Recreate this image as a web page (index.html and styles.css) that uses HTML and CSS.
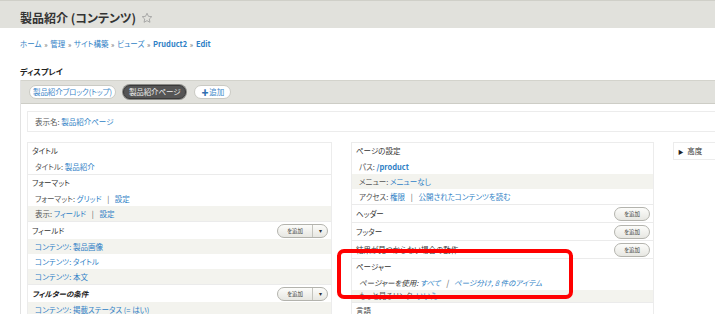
FILE: index.html
```html
<!DOCTYPE html>
<html lang="ja">
<head>
<meta charset="utf-8">
<title>製品紹介 (コンテンツ)</title>
<link rel="stylesheet" href="styles.css">
</head>
<body>
<header class="page-header">
  <h1 class="page-title">製品紹介 (コンテンツ)
    <svg class="star" viewBox="0 0 24 24" width="12" height="12" aria-hidden="true"><path d="M12 2.5l2.9 6.1 6.6.8-4.9 4.6 1.3 6.6L12 17.3l-5.9 3.3 1.3-6.6-4.9-4.6 6.6-.8z" fill="none" stroke="#9a9a9a" stroke-width="1.6" stroke-linejoin="round"/></svg>
  </h1>
</header>
<nav class="breadcrumb"><a href="#">ホーム</a> <span class="sep">»</span> <a href="#">管理</a> <span class="sep">»</span> <a href="#">サイト構築</a> <span class="sep">»</span> <a href="#">ビューズ</a> <span class="sep">»</span> <a href="#" class="strong">Pruduct2</a> <span class="sep">»</span> <a href="#" class="strong">Edit</a></nav>
<h2 class="section-title">ディスプレイ</h2>
<div class="display">
  <div class="tabs">
    <a href="#" class="tab">製品紹介ブロック(トップ)</a>
    <a href="#" class="tab active">製品紹介ページ</a>
    <a href="#" class="tab add"><span class="plus">✚</span>追加</a>
  </div>
  <div class="display-body">
    <div class="display-name"><span class="label">表示名:</span> <a href="#">製品紹介ページ</a></div>
    <div class="columns">
      <div class="col">
        <section class="bucket">
          <div class="bucket-head">タイトル</div>
          <div class="row"><span class="label">タイトル:</span> <a href="#">製品紹介</a></div>
        </section>
        <section class="bucket">
          <div class="bucket-head">フォーマット</div>
          <div class="row"><span class="label">フォーマット:</span> <a href="#">グリッド</a> <span class="pipe">|</span> <a href="#">設定</a></div>
          <div class="row striped"><span class="label">表示:</span> <a href="#">フィールド</a> <span class="pipe">|</span> <a href="#">設定</a></div>
        </section>
        <section class="bucket">
          <div class="bucket-head with-btn">フィールド
            <span class="btn split"><span class="btn-main">を追加</span><span class="btn-drop">▾</span></span>
          </div>
          <div class="row striped"><a href="#">コンテンツ: 製品画像</a></div>
          <div class="row"><a href="#">コンテンツ: タイトル</a></div>
          <div class="row striped"><a href="#">コンテンツ: 本文</a></div>
        </section>
        <section class="bucket">
          <div class="bucket-head with-btn"><em class="em-head">フィルターの条件</em>
            <span class="btn split"><span class="btn-main">を追加</span><span class="btn-drop">▾</span></span>
          </div>
          <div class="row striped"><a href="#">コンテンツ: 掲載ステータス (= はい)</a></div>
        </section>
      </div>
      <div class="col col-middle">
        <section class="bucket">
          <div class="bucket-head">ページの設定</div>
          <div class="row"><span class="label">パス:</span> <a href="#" class="strong">/product</a></div>
          <div class="row striped"><span class="label">メニュー:</span> <a href="#">メニューなし</a></div>
          <div class="row"><span class="label">アクセス:</span> <a href="#">権限</a> <span class="pipe">|</span> <a href="#">公開されたコンテンツを読む</a></div>
        </section>
        <section class="bucket">
          <div class="bucket-head with-btn">ヘッダー <span class="btn single">を追加</span></div>
        </section>
        <section class="bucket">
          <div class="bucket-head with-btn">フッター <span class="btn single">を追加</span></div>
        </section>
        <section class="bucket">
          <div class="bucket-head with-btn">結果が見つからない場合の動作 <span class="btn single">を追加</span></div>
        </section>
        <section class="bucket">
          <div class="bucket-head">ページャー</div>
          <div class="row italic"><span class="label dark">ページャーを使用:</span> <a href="#">すべて</a> <span class="pipe">|</span> <a href="#">ページ分け, 8 件のアイテム</a></div>
          <div class="row striped short"><span class="label">もっと見るリンク:</span> <a href="#">いいえ</a></div>
        </section>
        <section class="bucket">
          <div class="bucket-head">言語</div>
        </section>
        <div class="highlight" aria-hidden="true"></div>
      </div>
      <div class="col-right">
        <div class="advanced"><span class="tri">▶</span> 高度</div>
      </div>
    </div>
  </div>
</div>
</body>
</html>
```
FILE: styles.css
```css
html, body {
  margin: 0;
  padding: 0;
  overflow: hidden;
}
body {
  width: 715px;
  height: 314px;
  background: #fff;
  color: #333;
  font-family: "Noto Sans CJK JP", "Noto Sans", sans-serif;
  font-size: 7.5px;
  font-feature-settings: "palt";
}
a {
  color: #2f7fc6;
  text-decoration: none;
}
a.strong {
  font-weight: 700;
}

/* header */
.page-header {
  box-sizing: border-box;
  height: 28px;
  background: #e1e1dc;
  border-top: 1px solid #cfcfc8;
  padding: 10px 0 0 20px;
}
.page-title {
  margin: 0;
  font-size: 12px;
  font-weight: 700;
  line-height: 14px;
  color: #333;
  display: flex;
  align-items: center;
  gap: 5px;
}
.star {
  display: block;
}

/* breadcrumb */
.breadcrumb {
  margin: 11px 0 0 20px;
  line-height: 10px;
  color: #555;
}
.breadcrumb .sep {
  color: #666;
  font-size: 7px;
  margin: 0 1px;
}

.section-title {
  margin: 18px 0 3px 20px;
  font-size: 8px;
  line-height: 10px;
  font-weight: 700;
  color: #222;
}

/* display panel */
.display {
  margin-left: 20px;
  margin-right: -40px;
  border-left: 1px solid #e2e2e2;
}
.tabs {
  height: 14px;
  background: #e1e1dc;
  border-top: 1px solid #d3d3cc;
  border-bottom: 1px solid #cdcdc6;
  padding: 4px 8px;
  display: flex;
  gap: 7px;
}
.tab {
  box-sizing: border-box;
  height: 14px;
  line-height: 12px;
  padding: 0 3px;
  border: 1px solid #cacac4;
  border-radius: 7px;
  background: #fff;
  color: #3a86c8;
  white-space: nowrap;
  letter-spacing: -0.1px;
}
.tab.active {
  padding: 0 5px;
  background: #555;
  border-color: #3a3a3a;
  color: #eee;
  box-shadow: 0 0 0 1px #8a8a86;
}
.tab.add {
  margin-left: 1px;
  padding: 0 6px;
}
.plus {
  color: #2f6fb0;
  font-size: 7px;
  margin-right: 1px;
}

.display-body {
  padding: 7px 0 0 6px;
}
.display-name {
  height: 19px;
  line-height: 19px;
  padding-left: 7px;
  border: 1px solid #ececec;
}
.label {
  color: #555;
}
.label.dark {
  color: #333;
}
.pipe {
  color: #555;
  margin: 0 4px;
}

.columns {
  margin-top: 10px;
  display: grid;
  grid-template-columns: 305px 303px 1fr;
  column-gap: 19px;
  align-items: start;
}
.col {
  border: 1px solid #ececec;
  border-bottom: none;
}
.col-middle {
  position: relative;
}
.bucket + .bucket {
  border-top: 1px solid #ebebeb;
}
.bucket-head {
  height: 16px;
  line-height: 16px;
  padding: 0 3px 0 4px;
  display: flex;
  justify-content: space-between;
  align-items: center;
  color: #333;
  white-space: nowrap;
}
.bucket-head.with-btn {
  height: 17px;
}
.em-head {
  font-weight: 700;
  font-style: italic;
  color: #222;
}
.row {
  height: 15px;
  line-height: 15px;
  padding-left: 7px;
  white-space: nowrap;
}
.row.short {
  height: 12px;
  line-height: 12px;
}
.row.striped {
  background: #f3f3ee;
}
.row.italic {
  font-style: italic;
}

/* buttons */
.btn {
  box-sizing: border-box;
  height: 14px;
  border: 1px solid #b3b3ad;
  border-radius: 7px;
  background: linear-gradient(#fcfcfa, #e7e7e2);
  color: #444;
  font-size: 5.5px;
  display: flex;
  align-items: center;
  line-height: 12px;
}
.btn.split {
  width: 51px;
}
.btn-main {
  width: 34px;
  text-align: center;
}
.btn-drop {
  flex: 1;
  align-self: stretch;
  border-left: 1px solid #c4c4be;
  text-align: center;
  font-size: 6px;
  color: #333;
}
.btn.single {
  width: 36px;
  justify-content: center;
}

.highlight {
  position: absolute;
  left: -15px;
  top: 106px;
  width: 236px;
  height: 50px;
  box-sizing: border-box;
  border: 4px solid #f00;
  border-radius: 7px;
}

.col-right {
  padding: 0;
}
.advanced {
  height: 16px;
  line-height: 16px;
  border: 1px solid #ececec;
  border-right: none;
  padding-left: 4px;
  color: #333;
}
.tri {
  font-size: 5.5px;
  color: #222;
  margin-right: 2px;
}
```
